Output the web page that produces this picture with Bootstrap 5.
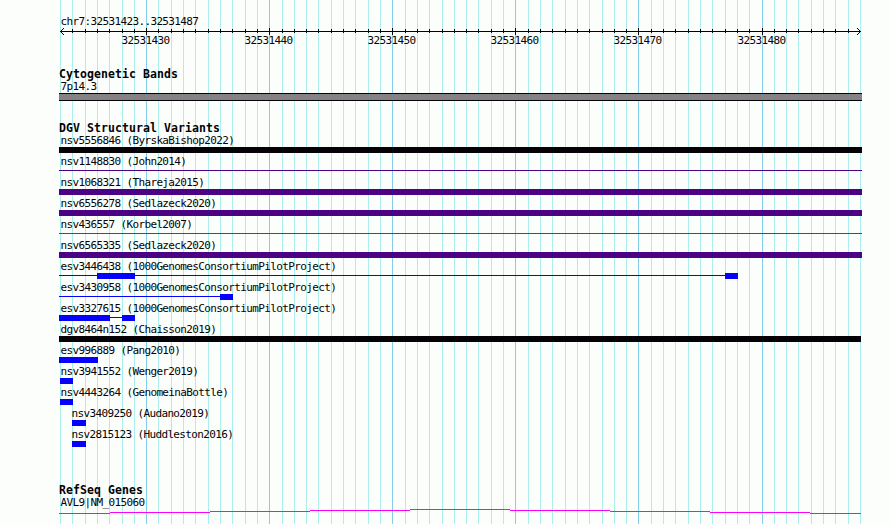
<!DOCTYPE html>
<html lang="en">

<head>
    <meta charset="UTF-8">
    <meta name="viewport" content="width=device-width, initial-scale=1.0">
    <title>chr7:32531423..32531487</title>
    <link href="https://cdn.jsdelivr.net/npm/bootstrap@5.3.0/dist/css/bootstrap.min.css" rel="stylesheet">
    <style>
        body {
            background: #fcfefc;
            color: #040204;
            font-family: "DejaVu Sans Mono", "Liberation Mono", monospace;
            font-size: 11px;
            letter-spacing: -0.63px;
        }

        .browser-panel {
            width: 890px;
            height: 524px;
        }

        svg {
            display: block;
            shape-rendering: crispEdges;
        }

        svg text {
            fill: #040204;
        }

        .ruler {
            height: 68px;
        }

        .track-title {
            height: 12px;
            line-height: 12px;
            padding-left: 59px;
            font-size: 11.5px;
            font-weight: bold;
            letter-spacing: 0.08px;
        }

        .feature {
            height: 21px;
        }

        .feature-label {
            height: 13px;
            line-height: 13px;
            padding-left: 60.5px;
        }

        .feature-label.shifted {
            padding-left: 71.5px;
        }

        .cytoband {
            height: 54px;
        }

        .variants {
            height: 362px;
        }
    </style>
</head>

<body>

    <div class="browser-panel position-relative overflow-hidden">
        <!-- Vertical grid behind all tracks -->
        <svg id="grid" class="position-absolute top-0 start-0" width="890" height="524"></svg>

        <div class="position-relative d-flex flex-column">
            <svg id="ruler" class="ruler" width="890" height="68"></svg>

            <section class="cytoband">
                <div class="track-title">Cytogenetic Bands</div>
                <div class="feature-label">7p14.3</div>
                <svg width="890" height="8">
                    <rect x="59" y="0" width="803" height="8" fill="#040204" />
                    <rect x="59" y="1" width="803" height="6" fill="#848284" />
                </svg>
            </section>

            <section class="variants">
                <div class="track-title">DGV Structural Variants</div>
                <div id="variantList"></div>
            </section>

            <section>
                <div class="track-title">RefSeq Genes</div>
                <div class="feature-label">AVL9|NM_015060</div>
                <svg id="gene" width="890" height="15"></svg>
            </section>
        </div>
    </div>

    <script>
        const START = 32531423;
        const END = 32531488;
        const LEFT = 60;
        const SCALE = 800 / (END - START);

        const BLACK = "#040204";
        const INDIGO = "#4c0284";
        const RED = "#fc0204";
        const BLUE = "#0402fc";

        // line: thin connector, blocks: thick parts, both as [from, to] in pixels
        const variants = [
            { name: "nsv5556846 (ByrskaBishop2022)", color: BLACK, blocks: [[59, 862]] },
            { name: "nsv1148830 (John2014)", color: INDIGO, line: [59, 862] },
            { name: "nsv1068321 (Thareja2015)", color: INDIGO, blocks: [[59, 862]] },
            { name: "nsv6556278 (Sedlazeck2020)", color: INDIGO, blocks: [[59, 862]] },
            { name: "nsv436557 (Korbel2007)", color: RED, line: [59, 862] },
            { name: "nsv6565335 (Sedlazeck2020)", color: INDIGO, blocks: [[59, 862]] },
            { name: "esv3446438 (1000GenomesConsortiumPilotProject)", color: BLUE, line: [59, 738], blocks: [[97, 135], [725, 738]] },
            { name: "esv3430958 (1000GenomesConsortiumPilotProject)", color: BLUE, line: [59, 233], blocks: [[220, 233]] },
            { name: "esv3327615 (1000GenomesConsortiumPilotProject)", color: BLUE, line: [59, 135], blocks: [[59, 110], [122, 135]] },
            { name: "dgv8464n152 (Chaisson2019)", color: BLACK, blocks: [[59, 861]] },
            { name: "esv996889 (Pang2010)", color: BLUE, blocks: [[59, 98]] },
            { name: "nsv3941552 (Wenger2019)", color: BLUE, blocks: [[60, 73]] },
            { name: "nsv4443264 (GenomeinaBottle)", color: BLUE, blocks: [[60, 73]] },
            { name: "nsv3409250 (Audano2019)", color: BLUE, blocks: [[72, 86]], shifted: true },
            { name: "nsv2815123 (Huddleston2016)", color: BLUE, blocks: [[72, 86]], shifted: true }
        ];

        function rect(x, y, w, h, color) {
            return `<rect x="${x}" y="${y}" width="${w}" height="${h}" fill="${color}"/>`;
        }

        // Grid lines and ruler ticks, one per base
        let grid = "";
        let ruler = `<text x="60.5" y="25">chr7:32531423..32531487</text>` + rect(60, 31, 801, 1, BLACK);
        for (let pos = START; pos <= END; pos++) {
            const x = Math.round(LEFT + (pos - START) * SCALE);
            const major = pos % 10 === 0;
            grid += rect(x, 0, 1, 524, major ? "#84ceec" : "#aceeec");
            if (major) {
                ruler += rect(x, 28, 1, 7, BLACK) + `<text x="${x - 24.5}" y="44">${pos}</text>`;
            } else if (pos > START && pos < END) {
                ruler += rect(x, 29, 1, 4, BLACK);
            }
        }

        // Arrow heads
        for (let i = 1; i <= 3; i++) {
            ruler += rect(60 + i, 31 - i, 1, 1, BLACK) + rect(60 + i, 31 + i, 1, 1, BLACK);
            ruler += rect(860 - i, 31 - i, 1, 1, BLACK) + rect(860 - i, 31 + i, 1, 1, BLACK);
        }
        document.getElementById("grid").innerHTML = grid;
        document.getElementById("ruler").innerHTML = ruler;

        // Variant rows
        document.getElementById("variantList").innerHTML = variants.map(v => {
            let shapes = "";
            if (v.line) {
                shapes += rect(v.line[0], 2, v.line[1] - v.line[0], 1, v.color);
            }
            (v.blocks || []).forEach(b => {
                shapes += rect(b[0], 0, b[1] - b[0], 6, v.color);
            });
            return `
                <div class="feature">
                    <div class="feature-label ${v.shifted ? "shifted" : ""}">${v.name}</div>
                    <svg width="890" height="6">${shapes}</svg>
                </div>`;
        }).join("");

        // Intron line of the gene, stepped towards the middle
        const steps = [[59, 110, 4], [110, 210, 3], [210, 310, 2], [310, 410, 1], [410, 510, 0],
            [510, 610, 1], [610, 710, 2], [710, 810, 3], [810, 861, 4]];
        document.getElementById("gene").innerHTML =
            steps.map(s => rect(s[0], s[2], s[1] - s[0], 1, "#fc02fc")).join("");
    </script>

    <script src="https://cdn.jsdelivr.net/npm/bootstrap@5.3.0/dist/js/bootstrap.bundle.min.js"></script>
</body>

</html>
